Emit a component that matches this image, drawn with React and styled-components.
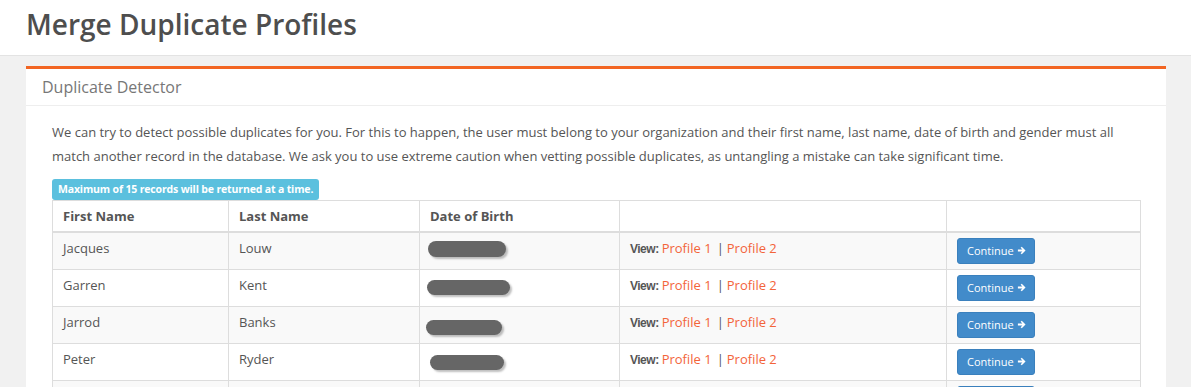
import React from "react";
import styled, { createGlobalStyle } from "styled-components";

const GlobalStyle = createGlobalStyle`
    html, body {
        margin: 0;
        padding: 0;
        background: #f1f1f1;
        font-family: "Open Sans", "Noto Sans", sans-serif;
        color: #555;
    }
`;

const PageHeader = styled.div`
    height: 56px;
    box-sizing: border-box;
    background: #fff;
    border-bottom: 1px solid #e3e3e3;
    padding: 0 26px 8px;
    display: flex;
    align-items: center;
`;

const Title = styled.h1`
    margin: 0;
    font-size: 28px;
    font-weight: 600;
    color: #4e4e4e;
`;

const Content = styled.div`
    padding: 10px 25px 0 26px;
`;

const Panel = styled.div`
    background: #fff;
    border-top: 3px solid #f26522;
`;

const PanelHeading = styled.div`
    height: 36px;
    padding: 0 16px;
    display: flex;
    align-items: center;
    font-size: 16px;
    color: #777;
    border-bottom: 1px solid #eee;
`;

const PanelBody = styled.div`
    padding: 14px 26px 0 26px;
`;

const Intro = styled.p`
    margin: 0 0 8px;
    font-size: 13px;
    line-height: 24px;
    color: #555;
`;

const InfoLabel = styled.span`
    display: inline-block;
    background: #5bc0de;
    color: #fff;
    font-size: 10.5px;
    font-weight: 700;
    letter-spacing: -0.15px;
    line-height: 1;
    padding: 5px 6px 5px;
    border-radius: 3px;
`;

const Table = styled.table`
    width: 1088px;
    border-collapse: collapse;
    table-layout: fixed;
    border: 1px solid #ddd;
    font-size: 13px;
`;

const Th = styled.th`
    text-align: left;
    font-weight: 700;
    color: #555;
    padding: 5px 10px;
    line-height: 20px;
    border: 1px solid #ddd;
    border-bottom: 2px solid #ddd;
`;

const Row = styled.tr`
    background: ${(p) => (p.$odd ? "#f9f9f9" : "#fff")};
`;

const Td = styled.td`
    vertical-align: top;
    padding: 5px 10px;
    line-height: 20px;
    border: 1px solid #ddd;
    color: #555;
`;

const Blur = styled.div`
    width: ${(p) => p.$w}px;
    height: ${(p) => p.$h}px;
    margin: ${(p) => p.$t}px 0 0 ${(p) => p.$l}px;
    background: #666;
    border-radius: 9px;
    box-shadow: 2px 2px 2px rgba(0, 0, 0, 0.25);
`;

const ViewLabel = styled.span`
    font-family: "Liberation Sans", Arial, sans-serif;
    font-size: 12px;
    font-weight: 700;
    letter-spacing: -0.5px;
    color: #555;
    margin-right: 3px;
`;

const ProfileLink = styled.a`
    color: #f3643a;
    text-decoration: none;
    font-size: 13px;
`;

const Sep = styled.span`
    margin: 0 3px 0 5px;
    color: #555;
`;

const ContinueButton = styled.button`
    display: inline-flex;
    align-items: center;
    gap: 3px;
    height: 26px;
    padding: 0 8px 0 9px;
    background: #428bca;
    border: 1px solid #3a80bd;
    border-radius: 3px;
    color: #fff;
    font-family: "Open Sans", "Noto Sans", sans-serif;
    font-size: 11px;
    cursor: pointer;
`;

const Arrow = () => (
    <svg width="9" height="9" viewBox="0 0 10 10">
        <path d="M1 4h5L4 2l1.3-1.3L9.5 5 5.3 9.3 4 8l2-2H1z" fill="#fff" />
    </svg>
);

const colWidths = [176, 191, 200, 327, 194];

const rows = [
    { first: "Jacques", last: "Louw", dob: { w: 78, h: 16, t: 3, l: -2 } },
    { first: "Garren", last: "Kent", dob: { w: 83, h: 15, t: 5, l: -3 } },
    { first: "Jarrod", last: "Banks", dob: { w: 76, h: 15, t: 8, l: -4 } },
    { first: "Peter", last: "Ryder", dob: { w: 74, h: 15, t: 6, l: 0 } },
    { first: "", last: "", dob: null },
];

function App() {
    return (
        <>
            <GlobalStyle />
            <PageHeader>
                <Title>Merge Duplicate Profiles</Title>
            </PageHeader>
            <Content>
                <Panel>
                    <PanelHeading>Duplicate Detector</PanelHeading>
                    <PanelBody>
                        <Intro>
                            We can try to detect possible duplicates for you. For this to happen, the user must belong to your organization and their first name, last name, date of birth and gender must all match another record in the database. We ask you to use extreme caution when vetting possible duplicates, as untangling a mistake can take significant time.
                        </Intro>
                        <InfoLabel>Maximum of 15 records will be returned at a time.</InfoLabel>
                        <Table>
                            <colgroup>
                                {colWidths.map((w, i) => (
                                    <col key={i} style={{ width: w }} />
                                ))}
                            </colgroup>
                            <thead>
                                <tr>
                                    <Th>First Name</Th>
                                    <Th>Last Name</Th>
                                    <Th>Date of Birth</Th>
                                    <Th></Th>
                                    <Th></Th>
                                </tr>
                            </thead>
                            <tbody>
                                {rows.map((r, i) => (
                                    <Row key={i} $odd={i % 2 === 0}>
                                        <Td>{r.first}</Td>
                                        <Td>{r.last}</Td>
                                        <Td>{r.dob && <Blur $w={r.dob.w} $h={r.dob.h} $t={r.dob.t} $l={r.dob.l} />}</Td>
                                        <Td>
                                            {r.first && (
                                                <>
                                                    <ViewLabel>View:</ViewLabel>
                                                    <ProfileLink href="#">Profile 1</ProfileLink>
                                                    <Sep>|</Sep>
                                                    <ProfileLink href="#">Profile 2</ProfileLink>
                                                </>
                                            )}
                                        </Td>
                                        <Td>
                                            <ContinueButton>
                                                Continue <Arrow />
                                            </ContinueButton>
                                        </Td>
                                    </Row>
                                ))}
                            </tbody>
                        </Table>
                    </PanelBody>
                </Panel>
            </Content>
        </>
    );
}

export default App;
